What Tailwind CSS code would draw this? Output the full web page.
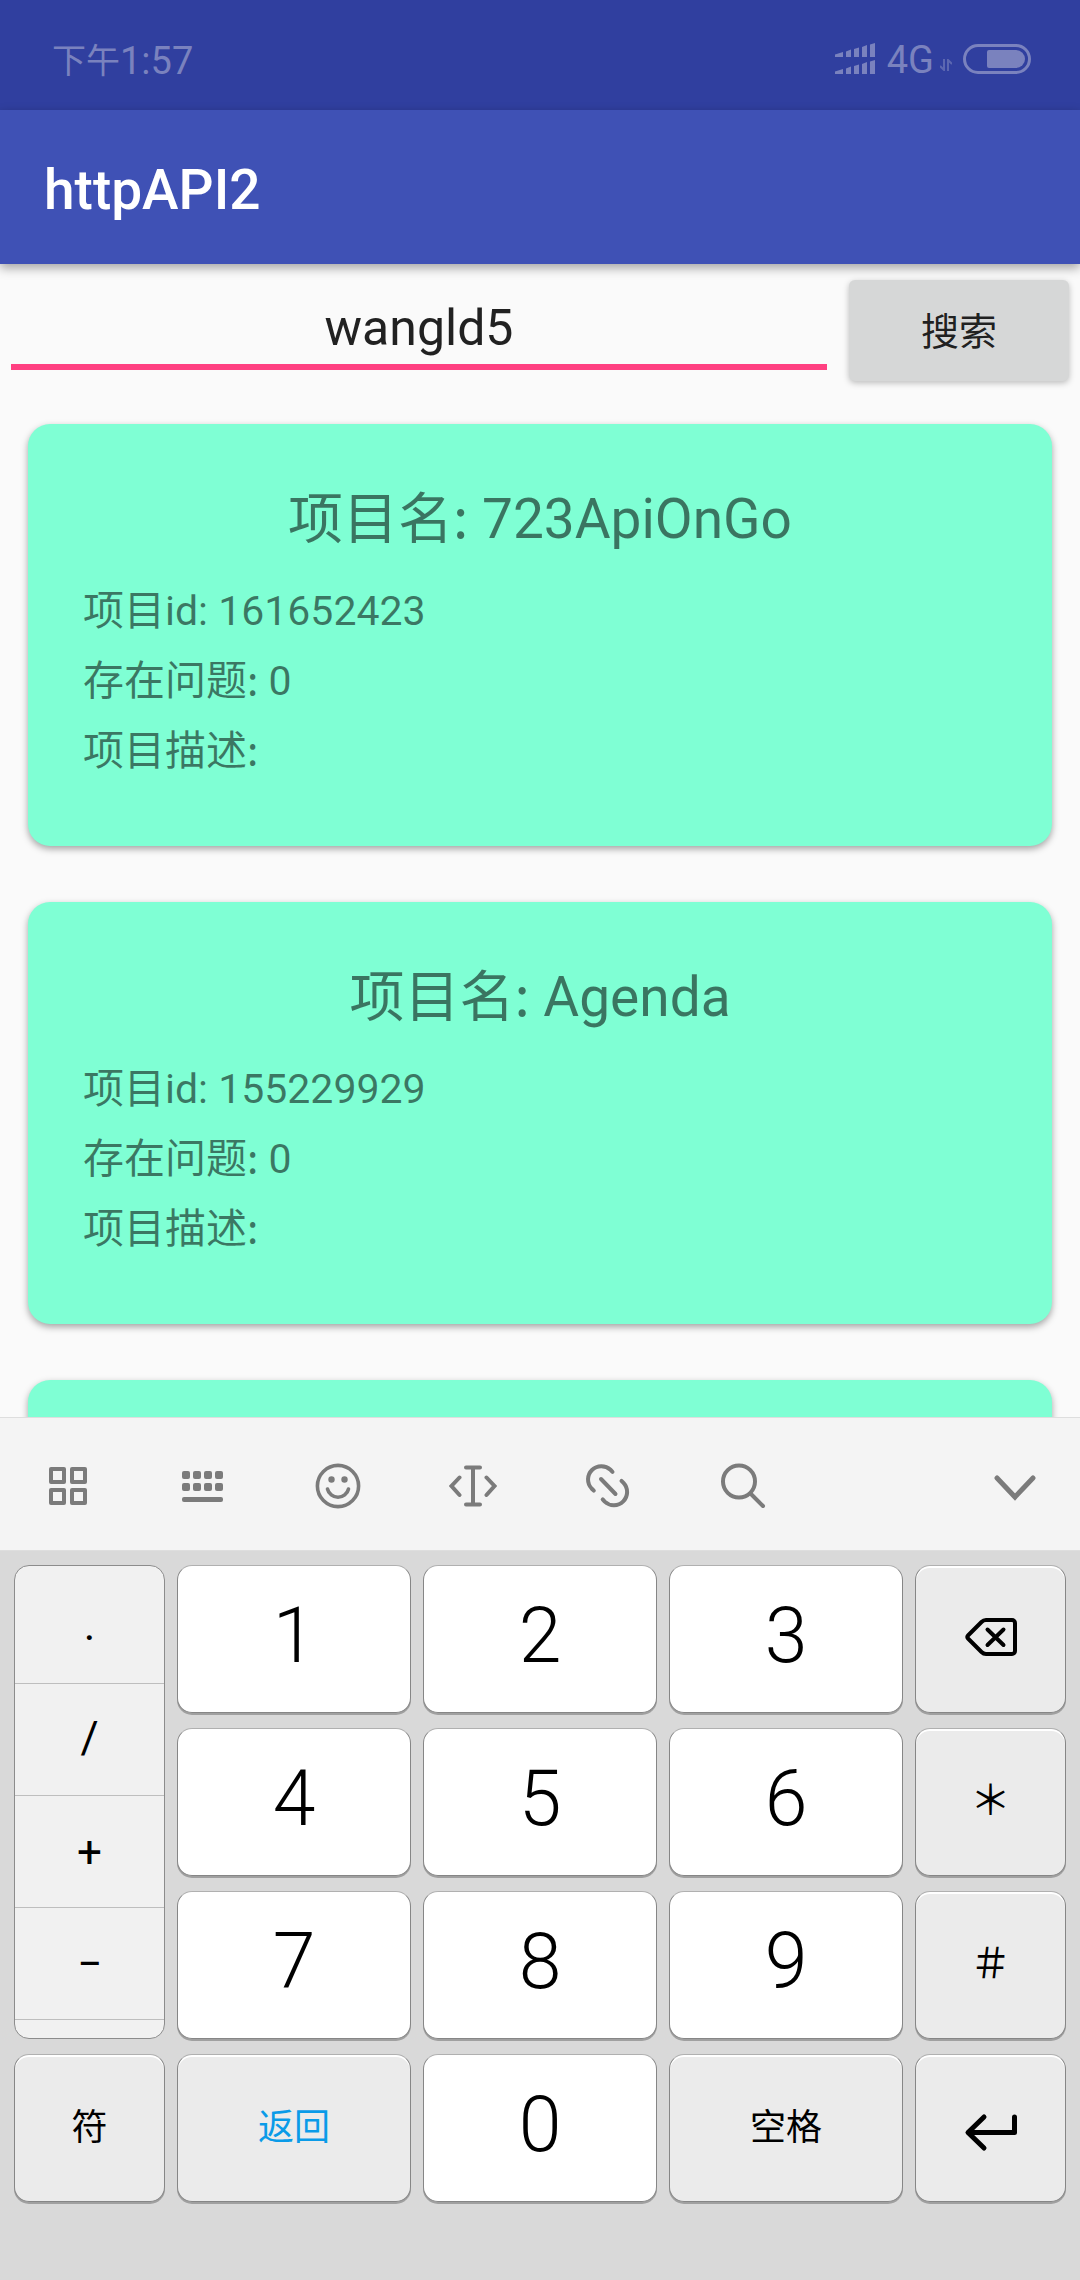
<!DOCTYPE html>
<html lang="zh-CN">
<head>
<meta charset="utf-8">
<meta name="viewport" content="width=device-width, initial-scale=1">
<title>httpAPI2</title>
<script src="https://cdn.jsdelivr.net/npm/@tailwindcss/browser@4"></script>
</head>
<body class="flex h-screen flex-col overflow-hidden bg-[#fafafa] font-[Roboto,'Noto_Sans_CJK_SC',sans-serif] text-black">

<!-- Status bar -->
<div class="flex h-[110px] shrink-0 items-center justify-between bg-[#303f9f] pt-2 pr-[49px] pl-[52px] text-[#7a82be]">
  <div class="flex items-center pt-1 text-[38px] leading-[44px]"><span class="text-[34px]">下午</span><span>1:57</span></div>
  <div class="flex items-center">
    <svg class="h-8 w-10" viewBox="0 0 40 32" fill="currentColor" aria-label="信号">
      <path d="M0 11.500l8-2.500v5H0zM11 8.500l5-2v7.500h-5zM19 6l5-1.500V14h-5zM27 4l5-2v12h-5zM35 1.500L40 0v14h-5z"/>
      <path d="M0 28.500l8-2.500v5H0zM11 25.500l5-2v7.500h-5zM19 23l5-1.500V31h-5zM27 21l5-2v12h-5zM35 18.500L40 17v14h-5z"/>
    </svg>
    <span class="ml-3 pt-0.5 text-[38px] leading-[44px]">4G</span>
    <svg class="mt-3 ml-1.5 h-3 w-3 opacity-60" viewBox="0 0 12 12" fill="none" stroke="currentColor" stroke-width="2" aria-hidden="true"><path d="M4 0v11L0 7M8 12V1l4 4"/></svg>
    <svg class="ml-[11px] h-[30px] w-[68px]" viewBox="0 0 68 30" aria-label="电池"><rect x="1.500" y="1.500" width="65" height="27" rx="13.500" fill="none" stroke="currentColor" stroke-width="3"/><path d="M26 6h27a9 9 0 0 1 0 18H26a2 2 0 0 1-2-2V8a2 2 0 0 1 2-2z" fill="currentColor"/></svg>
  </div>
</div>

<!-- App bar -->
<header class="relative flex h-[154px] shrink-0 items-center bg-[#3f51b5] px-11 pt-1.5 shadow-[0_4px_10px_rgba(0,0,0,0.35)]">
  <h1 class="text-[55px] leading-[64px] font-medium text-white">httpAPI2</h1>
</header>

<main class="flex min-h-0 flex-1 flex-col overflow-hidden">
  <form class="flex shrink-0 items-start gap-[22px] px-[11px] pt-4">
    <input type="text" aria-label="用户名" value="wangld5" class="h-[90px] min-w-0 flex-1 border-b-6 border-[#ff4081] pt-3 text-center text-[50px] text-black/87 outline-none">
    <button type="button" class="h-[101px] w-[220px] rounded-md bg-[#d6d7d7] pt-1 text-[38px] text-black/87 shadow-[0_2px_6px_rgba(0,0,0,0.25)]">搜索</button>
  </form>

  <div class="flex flex-col gap-14 px-7 pt-[43px]">
    <article class="shrink-0 rounded-[22px] bg-[#7fffd4] px-[55px] pt-[59px] pb-[60px] text-black/54 shadow-[0_3px_7px_rgba(0,0,0,0.35)]">
      <h2 class="mb-[21px] text-center text-[55px] leading-[72px]"><span class="font-['Noto_Sans_CJK_SC',sans-serif] leading-none">项目名:</span> 723ApiOnGo</h2>
      <p class="text-[41px] leading-[70px]">项目id: 161652423</p>
      <p class="text-[41px] leading-[70px]"><span class="font-['Noto_Sans_CJK_SC',sans-serif] leading-none">存在问题:</span> 0</p>
      <p class="text-[41px] leading-[70px]"><span class="font-['Noto_Sans_CJK_SC',sans-serif] leading-none">项目描述:</span></p>
    </article>
    <article class="shrink-0 rounded-[22px] bg-[#7fffd4] px-[55px] pt-[59px] pb-[60px] text-black/54 shadow-[0_3px_7px_rgba(0,0,0,0.35)]">
      <h2 class="mb-[21px] text-center text-[55px] leading-[72px]"><span class="font-['Noto_Sans_CJK_SC',sans-serif] leading-none">项目名:</span> Agenda</h2>
      <p class="text-[41px] leading-[70px]">项目id: 155229929</p>
      <p class="text-[41px] leading-[70px]"><span class="font-['Noto_Sans_CJK_SC',sans-serif] leading-none">存在问题:</span> 0</p>
      <p class="text-[41px] leading-[70px]"><span class="font-['Noto_Sans_CJK_SC',sans-serif] leading-none">项目描述:</span></p>
    </article>
    <article class="min-h-24 shrink-0 rounded-[22px] bg-[#7fffd4] shadow-[0_3px_7px_rgba(0,0,0,0.35)]"></article>
  </div>
</main>

<!-- Soft keyboard -->
<section class="relative shrink-0 bg-[#d9d9d9]" aria-label="键盘">
  <div class="grid h-[134px] grid-cols-8 items-center justify-items-center border-y border-[#dedede] bg-[#f4f4f4] pt-1 text-[#7b7b7b]">
    <button type="button" aria-label="菜单"><svg class="size-12" viewBox="0 0 48 48" fill="none" stroke="currentColor" stroke-width="4" stroke-linejoin="round"><path d="M7 7h13v13H7zM28 7h13v13H28zM7 28h13v13H7zM28 28h13v13H28z"/></svg></button>
    <button type="button" aria-label="切换键盘"><svg class="size-12" viewBox="0 0 48 48" fill="currentColor"><rect x="3" y="9" width="8" height="8" rx="2"/><rect x="14" y="9" width="8" height="8" rx="2"/><rect x="25" y="9" width="8" height="8" rx="2"/><rect x="36" y="9" width="8" height="8" rx="2"/><rect x="3" y="21" width="8" height="8" rx="2"/><rect x="14" y="21" width="8" height="8" rx="2"/><rect x="25" y="21" width="8" height="8" rx="2"/><rect x="36" y="21" width="8" height="8" rx="2"/><rect x="3" y="35" width="41" height="5" rx="2"/></svg></button>
    <button type="button" aria-label="表情"><svg class="size-12" viewBox="0 0 48 48" fill="none" stroke="currentColor" stroke-width="3.600" stroke-linecap="round"><circle cx="24" cy="24" r="20.600"/><path d="M13.500 27a10.800 10.800 0 0 0 21 0"/><g fill="currentColor" stroke="none"><circle cx="17.500" cy="17.500" r="3.200"/><circle cx="30.500" cy="17.500" r="3.200"/></g></svg></button>
    <button type="button" aria-label="移动光标"><svg class="size-12" viewBox="0 0 48 48" fill="none" stroke="currentColor" stroke-width="4" stroke-linecap="round"><path d="M17 5.500h14M17 42.500h14M24 6v36M10.500 15.500L2.500 24l8 9M37.500 15.500l8 8.500-8 9"/></svg></button>
    <button type="button" aria-label="链接"><svg class="size-12" viewBox="0 0 48 48" fill="none" stroke="currentColor" stroke-width="4" stroke-linecap="round"><path d="M28.500 9.800l-2-2A13.300 13.300 0 0 0 7.600 26.500l2.200 2.200M17 17l14.500 15M37.500 18.800l2 2A13.300 13.300 0 0 1 20.700 39.600l-2-2.200"/></svg></button>
    <button type="button" aria-label="搜索"><svg class="size-12" viewBox="0 0 48 48" fill="none" stroke="currentColor" stroke-width="4" stroke-linecap="round"><circle cx="20" cy="19.500" r="16"/><path d="M31.500 31.500L44 44"/></svg></button>
    <span></span>
    <button type="button" aria-label="收起键盘"><svg class="ml-1 size-12" viewBox="0 0 48 48" fill="none" stroke="currentColor" stroke-width="5" stroke-linecap="round"><path d="M6 16l18 19 18-19"/></svg></button>
  </div>

  <div class="grid auto-rows-[148px] grid-cols-[151fr_234fr_234fr_234fr_151fr] gap-x-3 gap-y-[15px] px-[14px] pt-[14px] pb-[78px] text-[36px]">
    <div class="row-span-3 flex flex-col overflow-hidden rounded-[15px] border border-[#8c8c8c] bg-[#f1f1f1] text-[44px]">
      <button type="button" class="h-[118px] shrink-0 border-b border-[#bebebe]">.</button>
      <button type="button" class="h-[112px] shrink-0 border-b border-[#bebebe] pb-1">/</button>
      <button type="button" class="h-[112px] shrink-0 border-b border-[#bebebe]">+</button>
      <button type="button" class="h-[112px] shrink-0 border-b border-[#bebebe]">−</button>
    </div>
    <button type="button" class="rounded-[15px] border border-[#868686] border-t-[#b0b0b0] bg-white pb-1 text-[77px] font-light shadow-[0_2px_0_#a0a0a0]">1</button>
    <button type="button" class="rounded-[15px] border border-[#868686] border-t-[#b0b0b0] bg-white pb-1 text-[77px] font-light shadow-[0_2px_0_#a0a0a0]">2</button>
    <button type="button" class="rounded-[15px] border border-[#868686] border-t-[#b0b0b0] bg-white pb-1 text-[77px] font-light shadow-[0_2px_0_#a0a0a0]">3</button>
    <button type="button" aria-label="退格" class="flex items-center justify-center rounded-[15px] border border-[#868686] border-t-[#b0b0b0] bg-[#ebebeb] pb-1 shadow-[0_2px_0_#a0a0a0,inset_0_2px_0_#fff]"><svg class="h-10 w-[54px]" viewBox="0 0 54 40" fill="none" stroke="currentColor" stroke-width="4" stroke-linecap="round" stroke-linejoin="round"><path d="M22 3h26a3 3 0 0 1 3 3v28a3 3 0 0 1-3 3H22q-2.500 0-4.500-2L4 21.500q-1.500-1.500 0-3L17.500 5q2-2 4.500-2zM23.500 12.500l16 15.500M39.500 12.500L23.500 28"/></svg></button>

    <button type="button" class="rounded-[15px] border border-[#868686] border-t-[#b0b0b0] bg-white pb-1 text-[77px] font-light shadow-[0_2px_0_#a0a0a0]">4</button>
    <button type="button" class="rounded-[15px] border border-[#868686] border-t-[#b0b0b0] bg-white pb-1 text-[77px] font-light shadow-[0_2px_0_#a0a0a0]">5</button>
    <button type="button" class="rounded-[15px] border border-[#868686] border-t-[#b0b0b0] bg-white pb-1 text-[77px] font-light shadow-[0_2px_0_#a0a0a0]">6</button>
    <button type="button" class="rounded-[15px] border border-[#868686] border-t-[#b0b0b0] bg-[#ebebeb] pb-2 font-['Noto_Sans_CJK_SC',sans-serif] text-[41px] shadow-[0_2px_0_#a0a0a0,inset_0_2px_0_#fff]">＊</button>

    <button type="button" class="rounded-[15px] border border-[#868686] border-t-[#b0b0b0] bg-white pb-1 text-[77px] font-light shadow-[0_2px_0_#a0a0a0]">7</button>
    <button type="button" class="rounded-[15px] border border-[#868686] border-t-[#b0b0b0] bg-white pb-1 text-[77px] font-light shadow-[0_2px_0_#a0a0a0]">8</button>
    <button type="button" class="rounded-[15px] border border-[#868686] border-t-[#b0b0b0] bg-white pb-1 text-[77px] font-light shadow-[0_2px_0_#a0a0a0]">9</button>
    <button type="button" class="rounded-[15px] border border-[#868686] border-t-[#b0b0b0] bg-[#ebebeb] pb-2 font-['Noto_Sans_CJK_SC',sans-serif] text-[41px] shadow-[0_2px_0_#a0a0a0,inset_0_2px_0_#fff]">＃</button>

    <button type="button" class="rounded-[15px] border border-[#868686] border-t-[#b0b0b0] bg-[#ebebeb] shadow-[0_2px_0_#a0a0a0,inset_0_2px_0_#fff]">符</button>
    <button type="button" class="rounded-[15px] border border-[#868686] border-t-[#b0b0b0] bg-[#ebebeb] text-[#0a9be8] shadow-[0_2px_0_#a0a0a0,inset_0_2px_0_#fff]">返回</button>
    <button type="button" class="rounded-[15px] border border-[#868686] border-t-[#b0b0b0] bg-white pb-1 text-[77px] font-light shadow-[0_2px_0_#a0a0a0]">0</button>
    <button type="button" class="rounded-[15px] border border-[#868686] border-t-[#b0b0b0] bg-[#ebebeb] shadow-[0_2px_0_#a0a0a0,inset_0_2px_0_#fff]">空格</button>
    <button type="button" aria-label="回车" class="flex items-center justify-center rounded-[15px] border border-[#868686] border-t-[#b0b0b0] bg-[#ebebeb] pt-2 shadow-[0_2px_0_#a0a0a0,inset_0_2px_0_#fff]"><svg class="h-10 w-[54px]" viewBox="0 0 54 40" fill="none" stroke="currentColor" stroke-width="5" stroke-linecap="round" stroke-linejoin="round"><path d="M20 5L4 20.500 20 36M5 20.500h45.500V5"/></svg></button>
  </div>
</section>
</body>
</html>
